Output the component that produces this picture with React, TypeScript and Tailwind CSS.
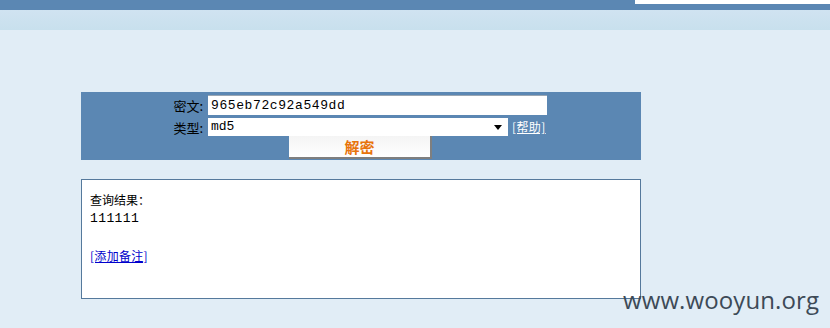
export default function App() {
  return (
    <div className="w-[830px] h-[328px] overflow-hidden bg-[#e1edf6] relative font-['Noto_Sans_CJK_SC',sans-serif] text-[12px]">
      {/* top bar */}
      <div className="h-[10px] bg-[#5b87b3] flex justify-end">
        <div className="w-[195px] h-[4px] bg-white" />
      </div>
      <div className="h-[20px] bg-gradient-to-b from-[#d0e3f1] to-[#c8e0ed]" />

      <div className="pl-[81px] pt-[62px]">
        {/* form panel */}
        <div className="w-[560px] h-[68px] bg-[#5b87b3] pt-[3px]">
          <div className="flex items-center h-[20px]">
            <span className="w-[127px] text-right pr-[5px] text-[13px] text-black leading-none">密文:</span>
            <div className="w-[339px] h-[20px] bg-white border-t border-[#9aa6b2] flex items-center pl-[3px] font-['Liberation_Mono',monospace] text-[13px] tracking-[0.6px] text-black">
              965eb72c92a549dd
            </div>
          </div>
          <div className="flex items-center h-[20px] mt-[2px]">
            <span className="w-[127px] text-right pr-[5px] text-[13px] text-black leading-none">类型:</span>
            <div className="w-[300px] h-[18px] bg-white flex items-center justify-between pl-[3px] pr-[6px] font-['Liberation_Mono',monospace] text-[13px] text-black">
              <span>md5</span>
              <svg width="8" height="5" viewBox="0 0 8 5">
                <path d="M0 0h8L4 5z" fill="#000" />
              </svg>
            </div>
            <a className="ml-[4px] text-white underline leading-none tracking-[0.4px]">[帮助]</a>
          </div>
          <div className="flex h-[23px] ml-[208px] mt-[-1px]">
            <div className="w-[143px] h-[23px] bg-gradient-to-b from-[#f4f4f4] to-white border-b-2 border-r-2 border-[#7f7f7f] flex items-center justify-center text-[#e8740c] font-bold text-[15px] leading-none">
              解密
            </div>
          </div>
        </div>

        {/* result box */}
        <div className="w-[560px] h-[120px] mt-[19px] bg-white border border-[#55799c] px-[8px] pt-[12px] text-black">
          <div className="leading-[16px]">查询结果：</div>
          <div className="font-['Liberation_Mono',monospace] text-[13px] leading-[16px] tracking-[0.4px] mt-[3px]">111111</div>
          <a className="block mt-[21px] text-[#0000cc] underline leading-[16px] tracking-[0.3px]">[添加备注]</a>
        </div>
      </div>

      {/* watermark */}
      <div className="absolute left-[623px] top-[282px] text-[#3d4a57] text-[24px] font-['Open_Sans',sans-serif] tracking-[0.1px]">
        www.wooyun.org
      </div>
    </div>
  );
}
